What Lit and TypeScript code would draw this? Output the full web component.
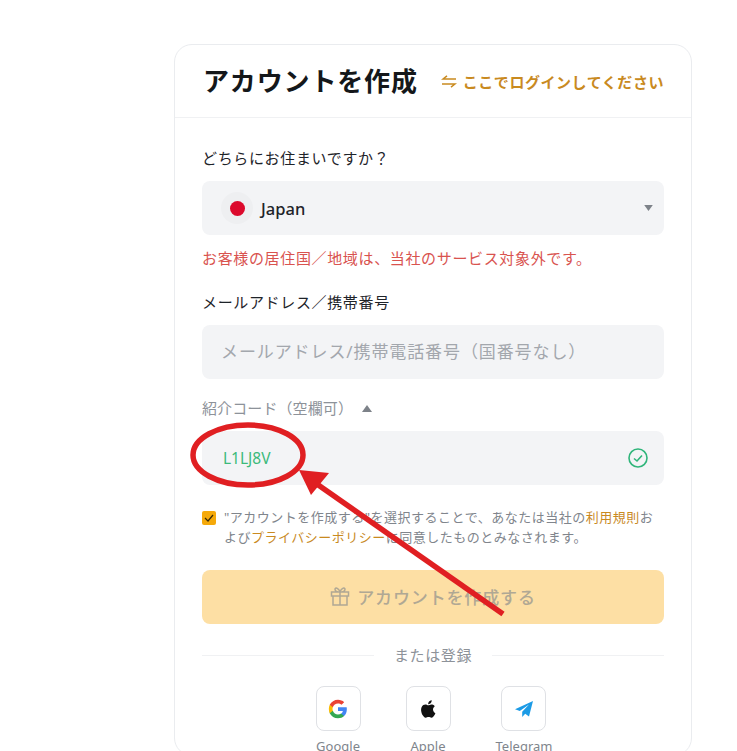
import { LitElement, html, css, svg } from 'lit';
import { customElement } from 'lit/decorators.js';

const googleIcon = svg`
  <path fill="#4285F4" d="M22.600 12.200c0-.8-.1-1.500-.2-2.200H12v4.300h5.900c-.3 1.400-1 2.500-2.200 3.300v2.800h3.600c2.100-1.900 3.300-4.800 3.300-8.200z"/>
  <path fill="#34A853" d="M12 23c3 0 5.500-1 7.300-2.700l-3.600-2.800c-1 .7-2.200 1.100-3.700 1.100-2.900 0-5.300-1.900-6.200-4.500H2.100v2.900C3.900 20.600 7.700 23 12 23z"/>
  <path fill="#FBBC05" d="M5.800 14.100c-.2-.7-.4-1.400-.4-2.100s.1-1.400.4-2.100V7H2.100C1.400 8.500 1 10.200 1 12s.4 3.500 1.100 5l3.700-2.900z"/>
  <path fill="#EA4335" d="M12 5.400c1.600 0 3.100.6 4.200 1.600l3.200-3.200C17.500 2.100 15 1 12 1 7.700 1 3.900 3.400 2.100 7l3.700 2.900c.9-2.600 3.300-4.500 6.200-4.500z"/>`;

@customElement('app-root')
export class AppRoot extends LitElement {
  static styles = css`
    :host {
      display: block;
      position: relative;
      height: 751px;
      overflow: hidden;
      background: #fff;
      color: #1e2329;
      font-family: 'Noto Sans', 'Noto Sans CJK JP', sans-serif;
    }
    .card {
      width: 518px;
      box-sizing: border-box;
      margin: 44px 0 0 174px;
      border: 1px solid #eaecef;
      border-radius: 18px;
    }
    .head {
      height: 73px;
      box-sizing: border-box;
      padding: 0 27px 0 28px;
      display: flex;
      align-items: center;
      justify-content: space-between;
      border-bottom: 1px solid #f0f1f3;
    }
    h1 {
      margin: 0;
      font-size: 26px;
      line-height: 34px;
      font-weight: 700;
      letter-spacing: 0.85px;
      color: #14171a;
    }
    .login {
      display: flex;
      align-items: center;
      gap: 6px;
      font-size: 15px;
      font-weight: 700;
      letter-spacing: 0.55px;
      color: #c98a1f;
    }
    .body {
      padding: 29px 27px 0 27px;
    }
    .label {
      font-size: 15px;
      line-height: 22px;
      height: 22px;
      margin-bottom: 12px;
      letter-spacing: 0.65px;
      color: #1e2329;
    }
    .label.muted {
      display: flex;
      align-items: center;
      gap: 9px;
      letter-spacing: 0.1px;
      color: #8d9299;
    }
    .field {
      height: 54px;
      box-sizing: border-box;
      background: #f3f4f6;
      border-radius: 8px;
      display: flex;
      align-items: center;
      padding: 0 16px 0 19px;
    }
    .select { padding: 0 11px 0 19px; }
    .flag {
      width: 32px;
      height: 32px;
      border-radius: 50%;
      background: #eeeff1;
      display: flex;
      align-items: center;
      justify-content: center;
      margin-right: 8px;
    }
    .flag i {
      width: 15px;
      height: 15px;
      border-radius: 50%;
      background: #dc0a2d;
    }
    .country {
      flex: 1;
      font-size: 16.5px;
      font-weight: 500;
      color: #1e2329;
    }
    .error {
      margin: 12px 0 22px;
      font-size: 15px;
      line-height: 22px;
      letter-spacing: 0.65px;
      color: #d9534f;
    }
    .placeholder {
      padding-bottom: 3px;
      font-size: 17px;
      color: #a3a7ad;
      letter-spacing: 0.9px;
    }
    .gap { height: 18px; }
    .code {
      flex: 1;
      padding-left: 2px;
      font-size: 15.5px;
      color: #3cba7a;
    }
    .terms {
      margin-top: 22px;
      display: flex;
      gap: 8px;
      font-size: 13px;
      line-height: 20px;
      letter-spacing: 0.5px;
      color: #80858c;
    }
    .check {
      flex: none;
      width: 14px;
      height: 14px;
      margin-top: 4px;
      border-radius: 2px;
      background: #f5a90a;
      display: flex;
      align-items: center;
      justify-content: center;
    }
    .terms a { color: #c98a1f; }
    .submit {
      margin-top: 23px;
      height: 54px;
      padding-bottom: 2px;
      box-sizing: border-box;
      border-radius: 8px;
      background: #fddfa4;
      display: flex;
      align-items: center;
      justify-content: center;
      gap: 7px;
      font-size: 17px;
      font-weight: 500;
      letter-spacing: 0.85px;
      color: #b0a894;
    }
    .or {
      margin-top: 20px;
      height: 22px;
      display: flex;
      align-items: center;
      gap: 20px;
      font-size: 15px;
      letter-spacing: 0.6px;
      color: #8d9299;
    }
    .or span { padding-bottom: 2px; }
    .or::before, .or::after {
      content: '';
      flex: 1;
      border-top: 1px solid #f0f1f3;
    }
    .social {
      margin-top: 20px;
      padding-left: 2px;
      display: flex;
      justify-content: center;
      gap: 45px;
    }
    .item {
      display: flex;
      flex-direction: column;
      align-items: center;
      gap: 6px;
      font-size: 13px;
      line-height: 18px;
      color: #80858c;
      min-width: 45px;
    }
    .tile {
      width: 45px;
      height: 45px;
      box-sizing: border-box;
      border: 1px solid #dfe1e5;
      border-radius: 8px;
      display: flex;
      align-items: center;
      justify-content: center;
    }
    .mark {
      position: absolute;
      inset: 0;
      pointer-events: none;
    }
  `;

  render() {
    return html`
      <div class="card">
        <div class="head">
          <h1>アカウントを作成</h1>
          <div class="login">
            <svg width="16" height="13" viewBox="0 0 16 13" fill="none" stroke="#c98a1f" stroke-width="1.5">
              <path d="M15 4H2L6 .8M1 9h13l-4 3.200"/>
            </svg>
            ここでログインしてください
          </div>
        </div>
        <div class="body">
          <div class="label">どちらにお住まいですか？</div>
          <div class="field select">
            <span class="flag"><i></i></span>
            <span class="country">Japan</span>
            <svg width="9" height="6" viewBox="0 0 10 7"><path fill="#7d8289" d="M0 0h10L5 7z"/></svg>
          </div>
          <div class="error">お客様の居住国／地域は、当社のサービス対象外です。</div>
          <div class="label">メールアドレス／携帯番号</div>
          <div class="field">
            <span class="placeholder">メールアドレス/携帯電話番号（国番号なし）</span>
          </div>
          <div class="gap"></div>
          <div class="label muted">
            紹介コード（空欄可）
            <svg width="10" height="7" viewBox="0 0 10 7"><path fill="#7d8289" d="M0 7h10L5 0z"/></svg>
          </div>
          <div class="field">
            <span class="code">L1LJ8V</span>
            <svg width="20" height="20" viewBox="0 0 20 20" fill="none" stroke="#2fb57a" stroke-width="1.600">
              <circle cx="10" cy="10" r="9"/>
              <path d="M6 10.500l3 2.500 5-5.500"/>
            </svg>
          </div>
          <div class="terms">
            <span class="check">
              <svg width="10" height="8" viewBox="0 0 10 8" fill="none" stroke="#3a2c08" stroke-width="1.200">
                <path d="M1 4l3 3 5-6"/>
              </svg>
            </span>
            <span>"アカウントを作成する"を選択することで、あなたは当社の<a>利用規則</a>および<a>プライバシーポリシー</a>に同意したものとみなされます。</span>
          </div>
          <div class="submit">
            <svg width="20" height="20" viewBox="0 0 20 20" fill="none" stroke="#b0a894" stroke-width="1.500">
              <path d="M1.500 6h17v4h-17zM3 10v9h14v-9M10 6v13M10 6C7 6 5 5 5 3.200S8.500 1.500 10 6zM10 6c3 0 5-1 5-2.800S11.500 1.500 10 6z"/>
            </svg>
            アカウントを作成する
          </div>
          <div class="or"><span>または登録</span></div>
          <div class="social">
            <div class="item">
              <div class="tile">
                <svg width="20" height="20" viewBox="0 0 24 24">${googleIcon}</svg>
              </div>
              Google
            </div>
            <div class="item">
              <div class="tile">
                <svg width="21" height="22" viewBox="0 0 24 24" fill="#111">
                  <path d="M17.100 12.700c0-2.500 2-3.700 2.100-3.800-1.200-1.700-3-1.900-3.600-2-1.500-.2-3 .9-3.800.9s-2-.9-3.300-.9c-1.700 0-3.300 1-4.100 2.500-1.800 3.100-.5 7.600 1.200 10.100.9 1.200 1.900 2.600 3.200 2.500 1.300-.1 1.800-.8 3.300-.8s2 .8 3.300.8c1.400 0 2.300-1.200 3.100-2.500 1-1.400 1.400-2.800 1.400-2.900-.1 0-2.800-1.100-2.800-4.400zM14.600 5.200c.7-.9 1.200-2 1-3.200-1 0-2.200.7-2.900 1.500-.6.700-1.200 1.900-1 3 1.100.1 2.200-.5 2.900-1.300z"/>
                </svg>
              </div>
              Apple
            </div>
            <div class="item">
              <div class="tile">
                <svg width="18" height="16" viewBox="0 0 18 16" fill="#1c9be6">
                  <path d="M18 0L0 8.200l4.800 1.700L14 3.500 7.200 10.800V16l3-3.300 3.800 2.800z"/>
                </svg>
              </div>
              Telegram
            </div>
          </div>
        </div>
      </div>
      <svg class="mark" width="737" height="751" viewBox="0 0 737 751" fill="none">
        <ellipse cx="248" cy="455" rx="55" ry="30" stroke="#e01f22" stroke-width="5.500"/>
        <path d="M503 614L314 482" stroke="#e01f22" stroke-width="5.500"/>
        <path fill="#e01f22" d="M299 470l30 3-18 22z"/>
      </svg>
    `;
  }
}

declare global {
  interface HTMLElementTagNameMap {
    'app-root': AppRoot;
  }
}
